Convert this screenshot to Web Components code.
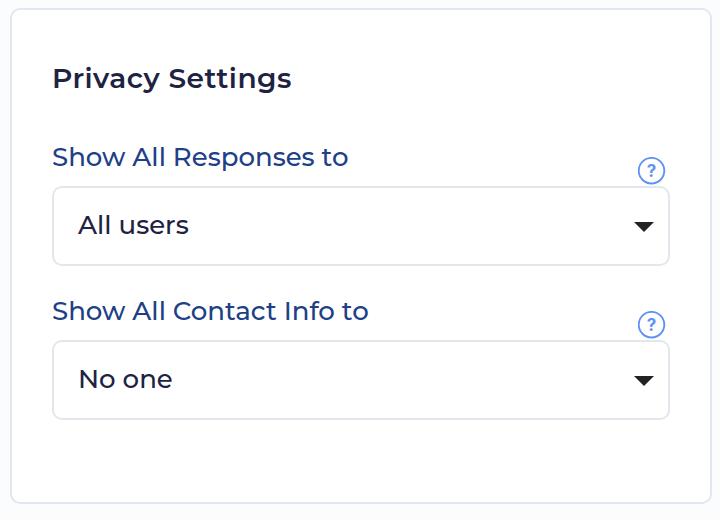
<!DOCTYPE html>
<html lang="en">
<head>
<meta charset="utf-8">
<title>Privacy Settings</title>
<style>
    body {
        margin: 0;
        background-color: #fbfcfe;
        font-family: Montserrat, Inter, sans-serif;
        font-weight: 500;
        color: #1e2342;
    }
</style>
</head>
<body>
<settings-card>
    <span slot="title">Privacy Settings</span>
    <setting-select label="Show All Responses to">All users</setting-select>
    <setting-select label="Show All Contact Info to">No one</setting-select>
</settings-card>

<script>
// Card with a title and a list of settings
class SettingsCard extends HTMLElement {
    constructor() {
        super();
        const template = document.createElement('template');
        template.innerHTML = `
            <style>
                :host {
                    display: block;
                    box-sizing: border-box;
                    width: 702px;
                    height: 496px;
                    margin: 8px 0 0 10px;
                    padding: 50px 40px 0;
                    background-color: white;
                    border: 2px solid #e2e7ef;
                    border-radius: 10px;
                }
                h2 {
                    margin: 0 0 44px;
                    font-size: 28px;
                    font-weight: 600;
                    line-height: 36px;
                    letter-spacing: 0.5px;
                }
                .settings {
                    display: flex;
                    flex-direction: column;
                    gap: 28px;
                }
            </style>
            <h2><slot name="title"></slot></h2>
            <div class="settings"><slot></slot></div>
        `;
        this.attachShadow({ mode: 'open' }).appendChild(template.content.cloneNode(true));
    }
}

// Round question mark next to a label
class HelpIcon extends HTMLElement {
    constructor() {
        super();
        const template = document.createElement('template');
        template.innerHTML = `
            <style>
                :host { display: block; width: 28px; height: 28px; }
                svg { display: block; }
                text {
                    font: 700 17px Inter, sans-serif;
                    fill: #5f92f3;
                    text-anchor: middle;
                }
            </style>
            <svg width="28" height="28" viewBox="0 0 28 28">
                <circle cx="13.5" cy="13.7" r="12.8" fill="white" stroke="#5f92f3" stroke-width="1.9"/>
                <text x="13.5" y="20">?</text>
            </svg>
        `;
        this.attachShadow({ mode: 'open' }).appendChild(template.content.cloneNode(true));
    }
}

// Label, help icon and select box
class SettingSelect extends HTMLElement {
    constructor() {
        super();
        const template = document.createElement('template');
        template.innerHTML = `
            <style>
                :host { display: block; }
                .header {
                    display: flex;
                    justify-content: space-between;
                    align-items: flex-end;
                    height: 46px;
                    box-sizing: border-box;
                    padding: 0 4px 1px 0;
                }
                label {
                    align-self: flex-start;
                    color: #213f87;
                    font-size: 26px;
                    line-height: 34px;
                    white-space: nowrap;
                }
                .box {
                    display: flex;
                    align-items: center;
                    justify-content: space-between;
                    box-sizing: border-box;
                    height: 80px;
                    padding: 0 14px 2px 24px;
                    border: 2px solid #e2e7ed;
                    border-radius: 10px;
                    font-size: 26px;
                }
                .arrow { margin-top: 4px; }
            </style>
            <div class="header"><label></label><help-icon></help-icon></div>
            <div class="box">
                <slot></slot>
                <svg class="arrow" width="20" height="10" viewBox="0 0 20 10"><path d="M0 0H20L10 10Z" fill="#222"/></svg>
            </div>
        `;
        this.attachShadow({ mode: 'open' }).appendChild(template.content.cloneNode(true));
    }

    connectedCallback() {
        this.shadowRoot.querySelector('label').textContent = this.getAttribute('label');
    }
}

customElements.define('help-icon', HelpIcon);
customElements.define('setting-select', SettingSelect);
customElements.define('settings-card', SettingsCard);
</script>
</body>
</html>
